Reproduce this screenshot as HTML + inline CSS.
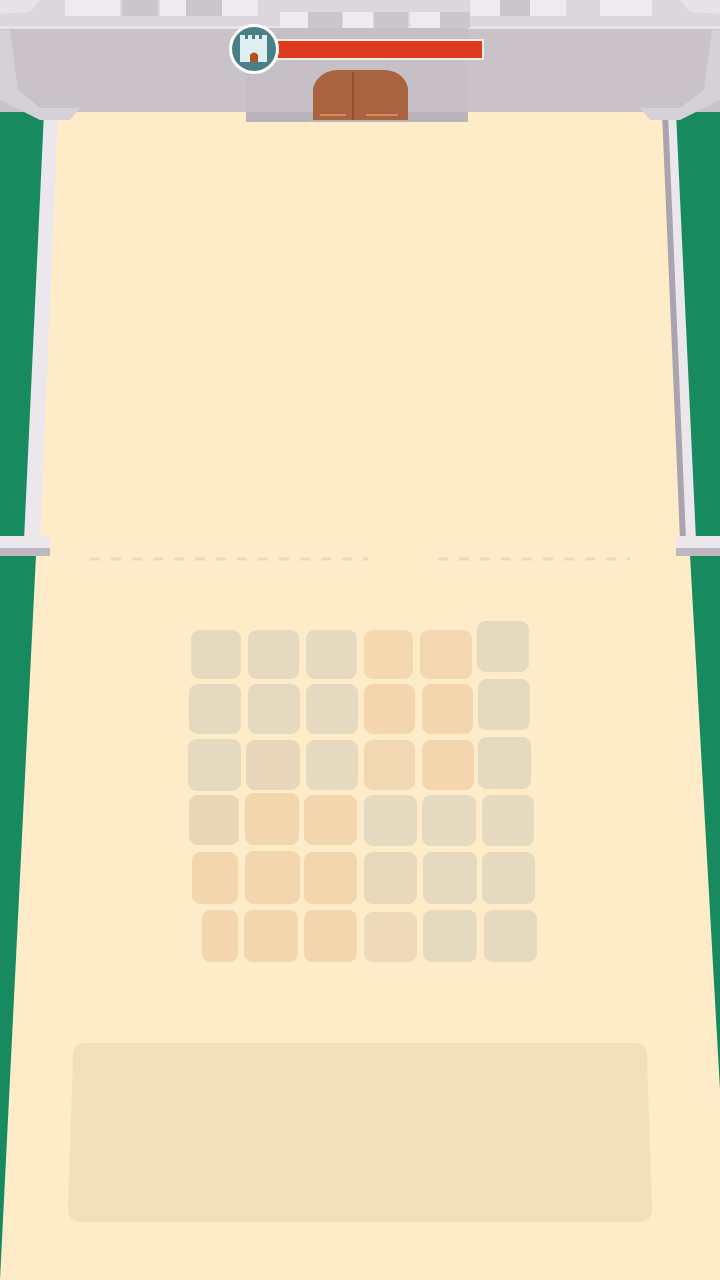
<!DOCTYPE html>
<html><head><meta charset="utf-8"><style>
html,body{margin:0;padding:0;width:720px;height:1280px;overflow:hidden;background:#178a60}
svg{display:block}
</style></head><body>
<svg width="720" height="1280" viewBox="0 0 720 1280" xmlns="http://www.w3.org/2000/svg">
<rect width="720" height="1280" fill="#178a60"/>
<!-- floor -->
<polygon points="55,112 665,112 690,555 720,1090 720,1280 0,1280 36,555" fill="#feebc8"/>
<!-- dashed line -->
<g stroke="#ecd9b8" stroke-width="3">
<line x1="90" y1="559" x2="368" y2="559" stroke-dasharray="10 11"/>
<line x1="438" y1="559" x2="630" y2="559" stroke-dasharray="10 11"/>
</g>
<!-- rails -->
<polygon points="44,112 58,112 40,540 24,540" fill="#ebe7ec"/>
<polygon points="662,112 676,112 696,540 680,540" fill="#ebe7ec"/>
<polygon points="662,112 668,112 686,540 680,540" fill="#a9a4ad"/>
<rect x="0" y="536" width="50" height="12" fill="#ebe7ec"/>
<rect x="0" y="548" width="50" height="8" fill="#bdb8bf"/>
<rect x="676" y="536" width="44" height="12" fill="#ebe7ec"/>
<rect x="676" y="548" width="44" height="8" fill="#bdb8bf"/>
<!-- castle wall -->
<rect x="0" y="0" width="720" height="112" fill="#c9c3c9"/>
<polygon points="0,0 720,0 720,28 0,28" fill="#dcd7dc"/>
<rect x="0" y="26" width="720" height="3" fill="#e6e2e6"/>
<!-- crenellations -->
<g fill="#eeeaee">
<rect x="65" y="0" width="55" height="16"/><rect x="160" y="0" width="26" height="16"/>
<rect x="222" y="0" width="36" height="16"/><rect x="280" y="12" width="28" height="16"/>
<rect x="343" y="12" width="30" height="16"/><rect x="410" y="12" width="30" height="16"/>
<rect x="470" y="0" width="30" height="16"/><rect x="530" y="0" width="36" height="16"/>
<rect x="600" y="0" width="52" height="16"/>
</g>
<g fill="#cbc6cb">
<rect x="122" y="0" width="36" height="16"/><rect x="186" y="0" width="36" height="16"/>
<rect x="308" y="12" width="34" height="16"/><rect x="374" y="12" width="34" height="16"/>
<rect x="440" y="12" width="30" height="16"/><rect x="500" y="0" width="30" height="16"/>
</g>
<!-- gate block -->
<rect x="246" y="28" width="222" height="94" fill="#c6c0c6"/>
<rect x="246" y="112" width="222" height="10" fill="#bbb5bb"/>
<!-- towers -->
<polygon points="0,30 10,30 18,90 40,108 80,108 70,120 40,120 0,100" fill="#d6d1d6"/>
<polygon points="720,30 712,30 704,90 680,108 640,108 650,120 680,120 720,100" fill="#d6d1d6"/>
<polygon points="0,0 40,0 30,12 0,14" fill="#e6e2e6"/>
<polygon points="720,0 680,0 690,12 720,14" fill="#e6e2e6"/>
<!-- door -->
<path d="M313,120 L313,88 Q318,72 336,70 L386,70 Q404,72 408,88 L408,120 Z" fill="#a9643f"/>
<line x1="353" y1="72" x2="353" y2="120" stroke="#8a4e30" stroke-width="2"/>
<line x1="320" y1="115" x2="346" y2="115" stroke="#d48a60" stroke-width="2"/>
<line x1="366" y1="115" x2="398" y2="115" stroke="#d48a60" stroke-width="2"/>
<!-- health bar -->
<rect x="276" y="39" width="208" height="21" fill="#fbeee6"/>
<rect x="278" y="41" width="204" height="17" fill="#e03a1e"/>
<circle cx="254" cy="49" r="25" fill="#fff"/>
<circle cx="254" cy="49" r="22" fill="#4a7f86"/>
<path d="M240,34 h5 v5 h4 v-5 h5 v5 h4 v-5 h5 v5 h5 v-5 h0 v0 M240,34 v28 h28 v-28 h-5" fill="none"/>
<path d="M240,35 h5 v4 h3 v-4 h4 v4 h3 v-4 h4 v4 h3 v-4 h5 v27 h-27 Z" fill="#dfeff1"/>
<path d="M250,62 v-7 q4,-5 8,0 v7 Z" fill="#b5511e"/>
<!-- grid -->
<g>
<!-- row 0 -->
<rect x="191" y="630" width="50" height="49" rx="9" fill="#e5dac0"/>
<rect x="248" y="630" width="51" height="49" rx="9" fill="#e5dac0"/>
<rect x="306" y="630" width="51" height="49" rx="9" fill="#e5dac0"/>
<rect x="364" y="630" width="49" height="49" rx="9" fill="#f4d8b0"/>
<rect x="420" y="630" width="52" height="49" rx="9" fill="#f3d7b0"/>
<rect x="477" y="621" width="52" height="51" rx="9" fill="#e5dac0"/>
<!-- row 1 -->
<rect x="189" y="684" width="52" height="50" rx="9" fill="#e5dac0"/>
<rect x="248" y="684" width="52" height="50" rx="9" fill="#e5dac0"/>
<rect x="306" y="684" width="52" height="50" rx="9" fill="#e5dac0"/>
<rect x="364" y="684" width="51" height="50" rx="9" fill="#f3d6ae"/>
<rect x="422" y="684" width="51" height="50" rx="9" fill="#f3d6ae"/>
<rect x="478" y="679" width="52" height="51" rx="9" fill="#e5dac0"/>
<!-- row 2 -->
<rect x="188" y="739" width="53" height="52" rx="9" fill="#e5dac0"/>
<rect x="246" y="740" width="54" height="50" rx="9" fill="#e8d7bb"/>
<rect x="306" y="740" width="52" height="50" rx="9" fill="#e5dac0"/>
<rect x="364" y="740" width="51" height="50" rx="9" fill="#f1d7b2"/>
<rect x="422" y="740" width="52" height="50" rx="9" fill="#f3d6ae"/>
<rect x="478" y="737" width="53" height="52" rx="9" fill="#e5dac0"/>
<!-- row 3 -->
<rect x="189" y="795" width="50" height="50" rx="9" fill="#ead7b8"/>
<rect x="245" y="793" width="54" height="52" rx="9" fill="#f3d6ae"/>
<rect x="304" y="795" width="53" height="50" rx="9" fill="#f3d6ae"/>
<rect x="364" y="795" width="53" height="51" rx="9" fill="#e5dac0"/>
<rect x="422" y="795" width="54" height="51" rx="9" fill="#e5dac0"/>
<rect x="482" y="795" width="52" height="51" rx="9" fill="#e5dac0"/>
<!-- row 4 -->
<rect x="192" y="852" width="46" height="52" rx="9" fill="#f3d6ae"/>
<rect x="245" y="851" width="55" height="53" rx="9" fill="#f3d6ae"/>
<rect x="304" y="852" width="53" height="52" rx="9" fill="#f3d6ae"/>
<rect x="364" y="852" width="53" height="52" rx="9" fill="#e8d9bd"/>
<rect x="423" y="852" width="54" height="52" rx="9" fill="#e5dac0"/>
<rect x="482" y="852" width="53" height="52" rx="9" fill="#e5dac0"/>
<!-- row 5 -->
<rect x="202" y="910" width="36" height="52" rx="9" fill="#f3d6ae"/>
<rect x="244" y="910" width="54" height="52" rx="9" fill="#f3d6ae"/>
<rect x="304" y="910" width="53" height="52" rx="9" fill="#f3d6ae"/>
<rect x="364" y="912" width="53" height="50" rx="9" fill="#eed9b8"/>
<rect x="423" y="910" width="54" height="52" rx="9" fill="#e5dac0"/>
<rect x="484" y="910" width="53" height="52" rx="9" fill="#e5dac0"/>
</g>
<!-- bottom panel -->
<path d="M86,1043 L634,1043 Q647,1043 647,1056 L652,1208 Q652,1222 638,1222 L82,1222 Q68,1222 68,1208 L73,1056 Q73,1043 86,1043 Z" fill="#f2e0bc"/>
</svg>
</body></html>
